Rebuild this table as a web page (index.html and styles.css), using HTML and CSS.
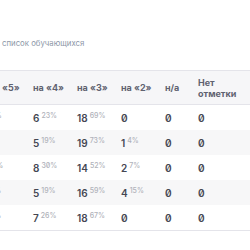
FILE: index.html
```html
<!DOCTYPE html>
<html>
<head>
<meta charset="utf-8">
<link rel="stylesheet" href="styles.css">
</head>
<body>
<div class="page">
  <div class="link">список обучающихся</div>
  <div class="scroller">
    <table class="grades">
      <thead>
        <tr>
          <th class="c1">на «5»</th>
          <th class="c2">на «4»</th>
          <th class="c3">на «3»</th>
          <th class="c4">на «2»</th>
          <th class="c5">н/а</th>
          <th class="c6">Нет<br>отметки</th>
        </tr>
      </thead>
      <tbody>
        <tr>
          <td class="first">2<sup>8%</sup></td>
          <td>6<sup>23%</sup></td>
          <td>18<sup>69%</sup></td>
          <td>0</td>
          <td>0</td>
          <td>0</td>
        </tr>
        <tr class="alt">
          <td class="first">1<sup>4%</sup></td>
          <td>5<sup>19%</sup></td>
          <td>19<sup>73%</sup></td>
          <td>1<sup>4%</sup></td>
          <td>0</td>
          <td>0</td>
        </tr>
        <tr>
          <td class="first">3<sup>11%</sup></td>
          <td>8<sup>30%</sup></td>
          <td>14<sup>52%</sup></td>
          <td>2<sup>7%</sup></td>
          <td>0</td>
          <td>0</td>
        </tr>
        <tr class="alt">
          <td class="first">2<sup>7%</sup></td>
          <td>5<sup>19%</sup></td>
          <td>16<sup>59%</sup></td>
          <td>4<sup>15%</sup></td>
          <td>0</td>
          <td>0</td>
        </tr>
        <tr>
          <td class="first">2<sup>7%</sup></td>
          <td>7<sup>26%</sup></td>
          <td>18<sup>67%</sup></td>
          <td>0</td>
          <td>0</td>
          <td>0</td>
        </tr>
      </tbody>
    </table>
  </div>
</div>
</body>
</html>
```
FILE: styles.css
```css
html, body {
  margin: 0;
  padding: 0;
  background: #ffffff;
}
body {
  font-family: Inter, "Noto Sans", sans-serif;
  font-feature-settings: "zero" 1;
  width: 250px;
  height: 250px;
  overflow: hidden;
}
.page {
  padding-top: 38px;
}
.link {
  font-size: 7.8px;
  color: #8d97a8;
  padding-left: 2px;
  line-height: 11px;
  height: 11px;
}
.scroller {
  margin-top: 21px;
  margin-left: -15px;
}
.grades {
  border-collapse: collapse;
  table-layout: fixed;
  width: 300px;
}
.grades th {
  background: #f6f6f8;
  color: #5f6270;
  font-size: 9px;
  font-weight: 700;
  text-align: left;
  padding: 0 0 0 4px;
  height: 33px;
  line-height: 11px;
  border-top: 1px solid #e4e4ea;
  border-bottom: 1px solid #e4e4ea;
}
.c1, .c2, .c3, .c4 { width: 40px; }
.grades th.c5 { width: 29px; }
.grades td {
  padding: 0 0 0 4px;
  height: 25px;
  font-size: 10px;
  font-weight: 600;
  color: #454753;
  white-space: nowrap;
}
.grades td.first {
  text-indent: -7px;
}
.grades tbody tr:last-child td {
  border-bottom: 1px solid #e4e4ea;
}
.grades tr.alt td {
  background: #f7f7f8;
}
.grades sup {
  font-size: 7px;
  font-weight: 500;
  color: #b0b2ba;
  margin-left: 2px;
  vertical-align: 4px;
  line-height: 0;
}
```
